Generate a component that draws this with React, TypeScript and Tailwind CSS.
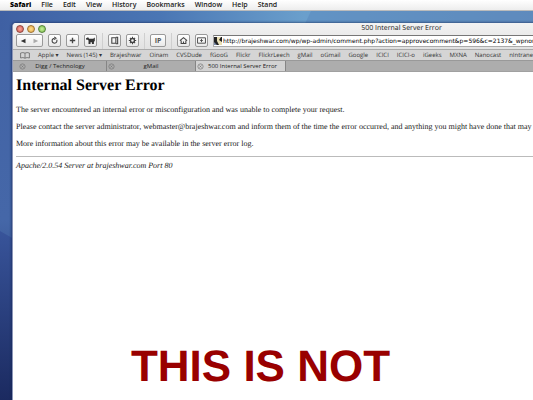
import React from "react";

const menus = ["File", "Edit", "View", "History", "Bookmarks", "Window", "Help", "Stand"];

const bookmarks = [
  "Apple ▾", "News (145) ▾", "Brajeshwar", "Oinam", "CVSDude", "fGooG", "Flickr", "FlickrLeech",
  "gMail", "oGmail", "Google", "ICICI", "ICICI-o", "iGeeks", "MXNA", "Nanocast", "nIntranet",
];

const url =
  "http://brajeshwar.com/wp/wp-admin/comment.php?action=approvecomment&p=596&c=2137&_wpnonce=4f1c";

function ToolButton({ label, children }: { label: string; children: React.ReactNode }) {
  return (
    <button
      aria-label={label}
      className="flex h-[13px] w-[13px] shrink-0 items-center justify-center rounded-[2px] border border-[#999] bg-linear-to-b from-white to-[#e9e9e9]"
    >
      <svg viewBox="0 0 10 10" className="h-[9px] w-[9px]" fill="none" stroke="#444" strokeWidth="1.2">
        {children}
      </svg>
    </button>
  );
}

function Divider() {
  return <div className="h-4 w-px shrink-0 bg-[#cfcfcf]" />;
}

function TabMark() {
  return (
    <svg viewBox="0 0 8 8" className="h-[7px] w-[7px] shrink-0" fill="none" stroke="#777" strokeWidth="0.8">
      <circle cx="4" cy="4" r="3" />
      <path d="M2.8 2.8l2.4 2.4M5.2 2.8L2.8 5.2" />
    </svg>
  );
}

export default function App() {
  return (
    <div className="relative flex h-screen flex-col overflow-hidden bg-linear-to-b from-[#4263a5] via-[#4567a8] via-55% to-[#1c2b60] font-['Open_Sans','Noto_Sans',sans-serif] [text-rendering:geometricPrecision]">
      <nav className="relative z-10 flex h-[11px] shrink-0 items-center gap-[10px] overflow-hidden border-b border-[#bbb] bg-linear-to-b from-white to-[#ededed] pl-[10px] text-[7px] leading-[10px] font-semibold whitespace-nowrap text-[#222]">
        <button className="font-extrabold text-black">Safari</button>
        {menus.map((m) => (
          <button key={m}>{m}</button>
        ))}
      </nav>

      <svg className="absolute inset-0 h-full w-full" viewBox="0 0 533 400" preserveAspectRatio="none" aria-hidden="true">
        <defs>
          <linearGradient id="sky" x1="0" x2="1">
            <stop offset="0" stopColor="#3f60a3" />
            <stop offset="0.3" stopColor="#4a76b4" />
            <stop offset="0.57" stopColor="#6a9fcc" />
            <stop offset="1" stopColor="#6690c0" />
          </linearGradient>
          <linearGradient id="depth" x1="0" x2="0" y1="0" y2="1">
            <stop offset="0" stopColor="#38549a" />
            <stop offset="1" stopColor="#1b2a60" />
          </linearGradient>
        </defs>
        <path d="M0 11H533V30H0Z" fill="url(#sky)" />
        <path d="M311 11H533V30H302Z" fill="#5482b8" opacity="0.4" />
        <path d="M0 231L14 239V400H0Z" fill="url(#depth)" />
      </svg>

      <main className="relative mt-3 ml-3 flex w-[778px] flex-1 flex-col overflow-hidden rounded-t-[4px] border-l border-[#8c96b8] bg-white shadow-[0_0_3px_#10204c]">
        <header className="shrink-0 bg-linear-to-b from-[#f3f3f3] to-[#d2d2d2]">
          <div className="relative flex h-[11px] items-center justify-center">
            <div className="absolute top-[2px] left-[3px] flex gap-[3px]">
              <button aria-label="Close" className="h-2 w-2 rounded-full border border-[#8d4640] bg-radial from-[#f8a79d] to-[#cf5147]" />
              <button aria-label="Minimize" className="h-2 w-2 rounded-full border border-[#9b7032] bg-radial from-[#ffdf8e] to-[#e3a43a]" />
              <button aria-label="Zoom" className="h-2 w-2 rounded-full border border-[#54813b] bg-radial from-[#c8f29b] to-[#76b843]" />
            </div>
            <h2 className="text-[7px] leading-[11px] font-medium text-[#222]">500 Internal Server Error</h2>
          </div>

          <div className="flex h-4 items-center gap-[5px] border-b border-[#aaa] pr-3 pb-[2px] pl-[3px]">
            <div className="flex h-[13px] w-[27px] shrink-0 rounded-[2px] border border-[#999] bg-linear-to-b from-white to-[#e9e9e9]">
              <button aria-label="Back" className="flex flex-1 items-center justify-center">
                <svg viewBox="0 0 6 6" className="h-[6px] w-[6px]"><path d="M5.5 .8v4.4L.8 3z" fill="#333" /></svg>
              </button>
              <button aria-label="Forward" className="flex flex-1 items-center justify-center">
                <svg viewBox="0 0 6 6" className="h-[6px] w-[6px]"><path d="M.5 .8v4.4L5.2 3z" fill="#aaa" /></svg>
              </button>
            </div>
            <ToolButton label="Reload">
              <path d="M7.5 4.2A2.7 2.7 0 1 1 5 2.6M4.7 1l2 1.6-2 1.5" />
            </ToolButton>
            <ToolButton label="Add bookmark">
              <path d="M5 2v6M2 5h6" strokeWidth="1.5" />
            </ToolButton>
            <ToolButton label="Report bug">
              <path d="M0 2.4l2.4-1L3.4 3H8L9.8 1.6V5.5L8.8 6.5V9H6.6V7H5V9H2.8V5L2 4.2H.3z" fill="#333" stroke="none" />
            </ToolButton>
            <Divider />
            <ToolButton label="Page">
              <path d="M2 2h4.5v6H2zM6.5 1.4h2v7.2h-2" />
            </ToolButton>
            <ToolButton label="Settings">
              <circle cx="5" cy="5" r="2.2" strokeWidth="1.5" />
              <path d="M5 .9v1.8M5 7.3v1.8M.9 5h1.8M7.3 5h1.8M2.1 2.1l1.2 1.2M6.7 6.7l1.2 1.2M7.9 2.1L6.7 3.3M3.3 6.7L2.1 7.9" />
            </ToolButton>
            <Divider />
            <button className="flex h-[13px] w-4 shrink-0 items-center justify-center rounded-[2px] border border-[#999] bg-linear-to-b from-white to-[#e9e9e9] text-[7px] leading-[10px] font-bold text-[#555]">
              IP
            </button>
            <Divider />
            <ToolButton label="Home">
              <path d="M1 5.2L5 1.8l4 3.4M2.4 5v3.3h5.2V5M5 8.3V6" />
            </ToolButton>
            <ToolButton label="Downloads">
              <path d="M.6 2h8.8v6H.6zM5 3.2v3.6M3.5 5h3" strokeWidth="1" />
            </ToolButton>
            <div className="flex h-[12px] min-w-0 flex-1 items-center gap-px border border-[#aaa] border-t-[#777] bg-white">
              <svg viewBox="0 0 8 8" className="h-2 w-2 shrink-0">
                <path d="M0 0h8v8H0z" fill="#222" />
                <path d="M3 0h4L5 3l3 2v3H5L3 4z" fill="#e9dfb4" />
                <path d="M0 5l3 3H0z" fill="#7c8ca8" />
              </svg>
              <input
                aria-label="Address"
                defaultValue={url}
                className="min-w-0 flex-1 bg-transparent font-['DejaVu_Sans',sans-serif] text-[6px] leading-[10px] text-black outline-none"
              />
            </div>
          </div>

          <nav className="flex h-[11px] items-center gap-2 overflow-hidden border-b border-[#999] bg-[#d5d5d5] pl-[7px] text-[6px] leading-[10px] font-medium whitespace-nowrap text-[#333]">
            <button aria-label="All bookmarks">
              <svg viewBox="0 0 10 7" className="h-[7px] w-[10px]" fill="none" stroke="#666" strokeWidth="0.8">
                <path d="M5 1.2Q3 0 .6 1v5Q3 5 5 6.2 7 5 9.4 6V1Q7 0 5 1.2v5" />
              </svg>
            </button>
            {bookmarks.map((b) => (
              <a key={b} href="#">{b}</a>
            ))}
          </nav>

          <div role="tablist" className="flex h-[11px] border-b border-[#a0a0a0] bg-[#adadad] text-[6px] leading-[10px] font-medium text-[#222]">
            <button role="tab" aria-selected="false" className="flex w-[94px] items-center border-r border-[#858585] pr-3 pl-[6px]">
              <TabMark />
              <span className="flex-1 text-center">Digg / Technology</span>
            </button>
            <button role="tab" aria-selected="false" className="flex w-[89px] items-center border-r border-[#858585] pr-2 pl-[1px]">
              <TabMark />
              <span className="flex-1 text-center">gMail</span>
            </button>
            <button role="tab" aria-selected="true" className="flex w-[90px] items-center border-r border-[#858585] bg-[#d2d2d2] pr-1 pl-[1px]">
              <TabMark />
              <span className="flex-1 text-center">500 Internal Server Error</span>
            </button>
          </div>
        </header>

        <article className="flex flex-col gap-2 pt-1 pr-1 pl-[3px] font-['Liberation_Serif',serif] text-[8px] leading-[9px] whitespace-nowrap text-[#222]">
          <h1 className="pb-px text-[16px] leading-[20px] font-bold text-black">Internal Server Error</h1>
          <p>The server encountered an internal error or misconfiguration and was unable to complete your request.</p>
          <p>
            Please contact the server administrator, webmaster@brajeshwar.com and inform them of the time the error
            occurred, and anything you might have done that may have caused the error.
          </p>
          <p>More information about this error may be available in the server error log.</p>
          <div className="border-t border-[#bbb] pt-1">
            <address>Apache/2.0.54 Server at brajeshwar.com Port 80</address>
          </div>
        </article>
      </main>

      <p className="absolute inset-x-0 bottom-2 pr-3 text-center font-['Liberation_Sans',sans-serif] text-[44px] leading-[50px] font-bold text-[#990000]">
        THIS IS NOT
      </p>
    </div>
  );
}
